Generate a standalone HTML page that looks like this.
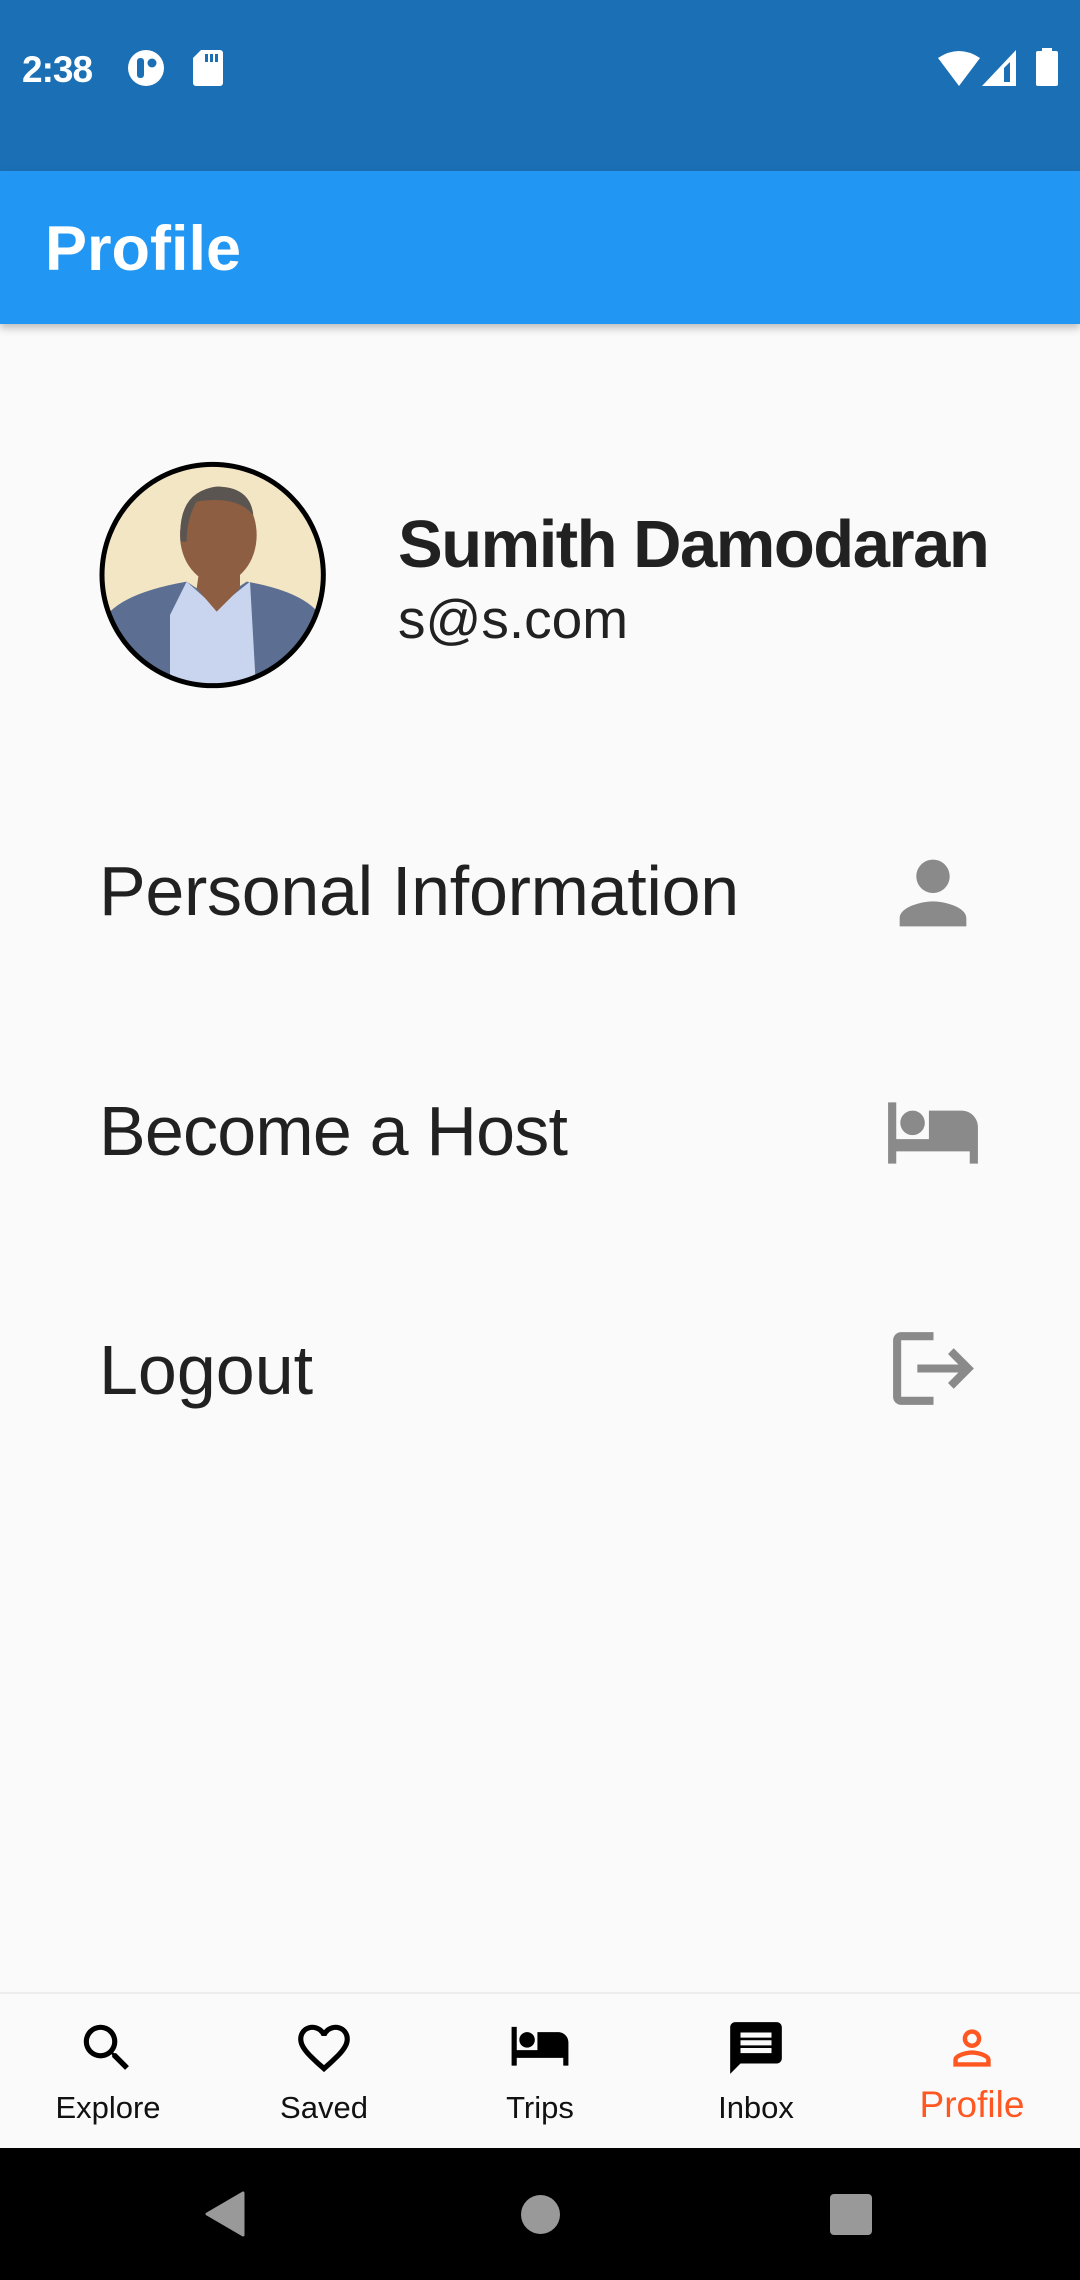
<!DOCTYPE html>
<html><head><meta charset="utf-8"><style>
*{margin:0;padding:0;box-sizing:border-box}
body{width:1080px;height:2280px;position:relative;background:#fafafa;font-family:"Liberation Sans",sans-serif;overflow:hidden}
.abs{position:absolute}
.status{left:0;top:0;width:1080px;height:171px;background:#1b70b5}
.appbar{left:0;top:171px;width:1080px;height:153px;background:#2196f3;box-shadow:0 4px 8px rgba(0,0,0,.25)}
.t{position:absolute;white-space:nowrap;line-height:1}
.item{font-size:70px;color:#212121;left:99px}
.nav{left:0;top:1992px;width:1080px;height:156px;background:#fafafa;border-top:2px solid #ececec}
.lbl{font-size:31px;color:#111;top:2092px;width:216px;text-align:center}
.sys{left:0;top:2148px;width:1080px;height:132px;background:#000}
</style></head><body>
<div class="abs status"></div>
<div class="t" style="left:22px;top:51px;font-size:37px;color:#fff;font-weight:bold;letter-spacing:-1px">2:38</div>
<svg class="abs" style="left:126px;top:48px" width="40" height="40" viewBox="0 0 40 40"><circle cx="20" cy="20" r="18" fill="#fff"/><rect x="11" y="10" width="7" height="20" rx="3" fill="#1b70b5"/><circle cx="26" cy="15" r="4.5" fill="#1b70b5"/></svg>
<svg class="abs" style="left:193px;top:50px" width="30" height="36" viewBox="0 0 30 36"><path d="M8 0H27a3 3 0 0 1 3 3V33a3 3 0 0 1-3 3H3a3 3 0 0 1-3-3V8z" fill="#fff"/><rect x="12" y="4" width="3" height="8" fill="#1b70b5"/><rect x="17" y="4" width="3" height="8" fill="#1b70b5"/><rect x="22" y="4" width="3" height="8" fill="#1b70b5"/></svg>
<svg class="abs" style="left:938px;top:50px" width="42" height="36" viewBox="0 0 42 36"><path d="M0 8Q21-6 42 8L21 36Z" fill="#fff"/></svg>
<svg class="abs" style="left:982px;top:50px" width="36" height="36" viewBox="0 0 36 36"><path d="M34 0V36H0Z" fill="#fff"/><path d="M28 12V32H22V18Z" fill="#1b70b5"/></svg>
<svg class="abs" style="left:1036px;top:48px" width="22" height="38" viewBox="0 0 22 38"><rect x="6" y="0" width="10" height="4" fill="#fff"/><rect x="0" y="3" width="22" height="35" rx="2" fill="#fff"/></svg>
<div class="abs appbar"></div>
<div class="t" style="left:45px;top:218px;font-size:63px;color:#fff;font-weight:bold">Profile</div>

<svg class="abs" style="left:90px;top:455px" width="245" height="245" viewBox="0 0 735 735">
<defs><clipPath id="c"><circle cx="368" cy="360" r="330"/></clipPath></defs>
<g clip-path="url(#c)">
<rect width="735" height="735" fill="#f3e6c4"/>
<path d="M60 470Q120 410 290 380L380 440 470 380Q640 410 690 480V735H60Z" fill="#5c6f92"/>
<path d="M240 480L290 380 380 460 480 380 500 735H240Z" fill="#c9d5ee"/>
<path d="M330 330Q380 420 450 330V400L380 470 320 400Z" fill="#8e5e42"/>
<ellipse cx="385" cy="240" rx="115" ry="145" fill="#8e5e42"/>
<path d="M272 260Q260 110 380 95Q480 95 490 180Q440 120 320 140Q290 190 290 260Z" fill="#5a5550"/>
</g>
<circle cx="368" cy="360" r="332" fill="none" stroke="#000" stroke-width="15"/>
</svg>

<div class="t" style="left:398px;top:511px;font-size:67px;font-weight:bold;color:#212121;letter-spacing:-1.5px">Sumith Damodaran</div>
<div class="t" style="left:398px;top:592px;font-size:55px;color:#212121">s@s.com</div>

<div class="t item" style="top:856px;letter-spacing:-0.3px">Personal Information</div>
<div class="t item" style="top:1096px;letter-spacing:-0.8px">Become a Host</div>
<div class="t item" style="top:1335px">Logout</div>

<svg class="abs" style="left:883px;top:843px" width="100" height="100" viewBox="0 0 24 24"><path fill="#8a8a8a" d="M12 12c2.21 0 4-1.790 4-4s-1.79-4-4-4-4 1.79-4 4 1.79 4 4 4zm0 2c-2.67 0-8 1.34-8 4v2h16v-2c0-2.660-5.33-4-8-4z"/></svg>
<svg class="abs" style="left:884px;top:1082px" width="98" height="98" viewBox="0 0 24 24"><path fill="#8a8a8a" d="M7 13c1.66 0 3-1.34 3-3S8.66 7 7 7s-3 1.34-3 3 1.34 3 3 3zm12-6h-8v7H3V5H1v15h2v-3h18v3h2v-9c0-2.21-1.79-4-4-4z"/></svg>
<svg class="abs" style="left:885px;top:1320px" width="97" height="97" viewBox="0 0 24 24"><path fill="#8a8a8a" d="M17 7l-1.41 1.41L18.17 11H8v2h10.17l-2.58 2.58L17 17l5-5zM4 5h8V3H4c-1.1 0-2 .9-2 2v14c0 1.1.9 2 2 2h8v-2H4V5z"/></svg>

<div class="abs nav"></div>
<svg class="abs" style="left:76px;top:2017px" width="62" height="62" viewBox="0 0 24 24"><path d="M15.5 14h-.79l-.28-.27A6.47 6.47 0 0 0 16 9.5 6.5 6.5 0 1 0 9.5 16c1.61 0 3.09-.59 4.23-1.57l.27.28v.79l5 4.99L20.49 19l-4.99-5zm-6 0C7.01 14 5 11.99 5 9.5S7.01 5 9.5 5 14 7.01 14 9.5 11.99 14 9.5 14z"/></svg>
<svg class="abs" style="left:293px;top:2017px" width="62" height="62" viewBox="0 0 24 24"><path d="M16.5 3c-1.74 0-3.41.81-4.5 2.09C10.91 3.81 9.24 3 7.5 3 4.42 3 2 5.42 2 8.5c0 3.780 3.4 6.86 8.55 11.54L12 21.35l1.45-1.32C18.6 15.36 22 12.28 22 8.5 22 5.42 19.58 3 16.5 3zm-4.4 15.55l-.1.1-.1-.1C7.14 14.24 4 11.39 4 8.5 4 6.5 5.5 5 7.5 5c1.54 0 3.04.99 3.57 2.36h1.87C13.46 5.99 14.96 5 16.5 5c2 0 3.5 1.5 3.5 3.5 0 2.89-3.14 5.74-7.9 10.050z"/></svg>
<svg class="abs" style="left:509px;top:2014px" width="62" height="62" viewBox="0 0 24 24"><path d="M7 13c1.66 0 3-1.34 3-3S8.66 7 7 7s-3 1.34-3 3 1.34 3 3 3zm12-6h-8v7H3V5H1v15h2v-3h18v3h2v-9c0-2.21-1.79-4-4-4z"/></svg>
<svg class="abs" style="left:725px;top:2017px" width="62" height="62" viewBox="0 0 24 24"><path d="M20 2H4c-1.1 0-1.99.9-1.99 2L2 22l4-4h14c1.1 0 2-.9 2-2V4c0-1.1-.9-2-2-2zM18 14H6v-2h12v2zm0-3H6V9h12v2zm0-3H6V6h12v2z"/></svg>
<svg class="abs" style="left:944px;top:2020px" width="56" height="56" viewBox="0 0 24 24"><path fill="#ff5722" d="M12 5.9a2.1 2.1 0 1 1 0 4.2 2.1 2.1 0 0 1 0-4.2m0 9c2.97 0 6.1 1.46 6.1 2.1v1.1H5.9V17c0-.64 3.13-2.1 6.1-2.1M12 4C9.79 4 8 5.79 8 8s1.79 4 4 4 4-1.79 4-4-1.79-4-4-4zm0 9c-2.67 0-8 1.34-8 4v3h16v-3c0-2.66-5.33-4-8-4z"/></svg>
<div class="t lbl" style="left:0">Explore</div>
<div class="t lbl" style="left:216px">Saved</div>
<div class="t lbl" style="left:432px">Trips</div>
<div class="t lbl" style="left:648px">Inbox</div>
<div class="t lbl" style="left:864px;top:2086px;font-size:37px;color:#ff5722">Profile</div>

<div class="abs sys"></div>
<svg class="abs" style="left:205px;top:2191px" width="40" height="46" viewBox="0 0 40 46"><path d="M38 2V44L2 23Z" fill="#999" stroke="#999" stroke-width="3" stroke-linejoin="round"/></svg>
<div class="abs" style="left:521px;top:2195px;width:39px;height:39px;border-radius:50%;background:#999"></div>
<div class="abs" style="left:830px;top:2194px;width:42px;height:41px;border-radius:4px;background:#999"></div>
</body></html>
